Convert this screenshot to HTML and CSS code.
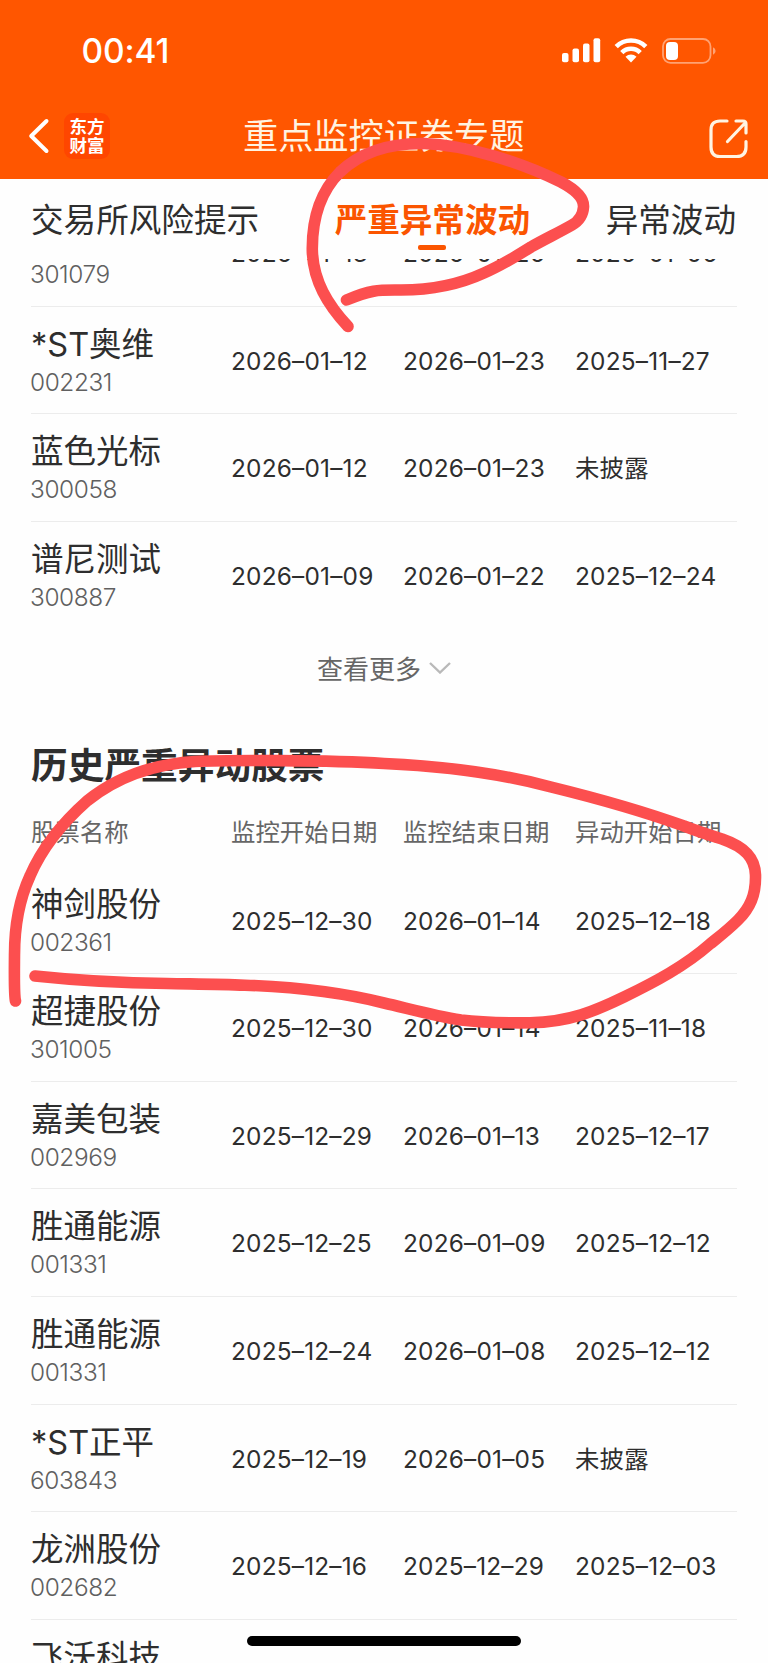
FILE: index.html
```html
<!DOCTYPE html>
<html lang="zh-CN">

<head>
    <meta charset="UTF-8">
    <meta name="viewport" content="width=device-width, initial-scale=1.0">
    <title>重点监控证券专题</title>
    <link rel="stylesheet" href="styles.css">
</head>

<body>
    <div class="screen">
        <header class="header">
            <div class="status-bar">
                <span class="clock">00:41</span>
                <div class="status-icons">
                    <svg class="signal" width="39" height="25" viewBox="0 0 39 25" fill="#fff">
                        <rect x="0" y="15" width="6.5" height="9.3" rx="2" />
                        <rect x="10.5" y="10.5" width="6.5" height="13.8" rx="2" />
                        <rect x="21" y="5.5" width="6.5" height="18.8" rx="2" />
                        <rect x="31.5" y="0.3" width="6.7" height="24" rx="2" />
                    </svg>
                    <svg class="wifi" width="34" height="25" viewBox="0 0 34 25">
                        <g fill="none" stroke="#fff" stroke-width="4.6">
                            <path d="M2.2 8.6a21 21 0 0 1 29.6 0" />
                            <path d="M7.8 14.6a13 13 0 0 1 18.4 0" />
                        </g>
                        <path d="M11.5 18.8a8 8 0 0 1 11 0L17 24.5z" fill="#fff" />
                    </svg>
                    <svg class="battery" width="54" height="26" viewBox="0 0 54 26">
                        <rect x="1" y="1" width="47.5" height="23.8" rx="7.5" fill="none" stroke="#ffa273" stroke-width="1.8" />
                        <rect x="4" y="4" width="12" height="18" rx="4" fill="#fff" />
                        <path d="M51 9.2q2.6 1.3 2.6 3.8T51 16.8z" fill="#ffa273" />
                    </svg>
                </div>
            </div>
            <nav class="nav-bar">
                <svg class="back" width="22" height="36" viewBox="0 0 22 36">
                    <path d="M18.5 3L3.2 18l15.3 15" fill="none" stroke="#fff" stroke-width="4" stroke-linecap="round" stroke-linejoin="round" />
                </svg>
                <div class="brand"><span>东方</span><span>财富</span></div>
                <h1 class="nav-title">重点监控证券专题</h1>
                <svg class="share" width="40" height="40" viewBox="0 0 40 40" fill="none" stroke="#fff4e2" stroke-width="3.2" stroke-linecap="round" stroke-linejoin="round">
                    <path d="M18 2H11Q2 2 2 11v17q0 9.5 9 9.5h16.500q9.5 0 9.5-9.5V22.5" />
                    <path d="M18.500 22.500L36.500 3.500M27 2h7q3 0 3 3v9" />
                </svg>
            </nav>
        </header>

        <div class="tabs">
            <span class="tab">交易所风险提示</span>
            <span class="tab active">严重异常波动</span>
            <span class="tab">异常波动</span>
        </div>

        <main class="content">
            <section class="current">
                <div class="row">
                    <div class="stock code-only"><i>301079</i></div>
                    <span>2026–01–13</span><span>2026–01–26</span><span>2026–01–06</span>
                </div>
                <div class="row">
                    <div class="stock"><b>*ST奥维</b><i>002231</i></div>
                    <span>2026–01–12</span><span>2026–01–23</span><span>2025–11–27</span>
                </div>
                <div class="row">
                    <div class="stock"><b>蓝色光标</b><i>300058</i></div>
                    <span>2026–01–12</span><span>2026–01–23</span><span>未披露</span>
                </div>
                <div class="row last">
                    <div class="stock"><b>谱尼测试</b><i>300887</i></div>
                    <span>2026–01–09</span><span>2026–01–22</span><span>2025–12–24</span>
                </div>
            </section>

            <div class="more">
                <span>查看更多</span>
                <svg width="22" height="13" viewBox="0 0 22 13">
                    <path d="M1 2l10 9.5L21 2" fill="none" stroke="#b9b9b9" stroke-width="2.4" />
                </svg>
            </div>

            <h2 class="section-title">历史严重异动股票</h2>
            <div class="table-head">
                <span>股票名称</span><span>监控开始日期</span><span>监控结束日期</span><span>异动开始日期</span>
            </div>

            <section class="history">
                <div class="row">
                    <div class="stock"><b>神剑股份</b><i>002361</i></div>
                    <span>2025–12–30</span><span>2026–01–14</span><span>2025–12–18</span>
                </div>
                <div class="row">
                    <div class="stock"><b>超捷股份</b><i>301005</i></div>
                    <span>2025–12–30</span><span>2026–01–14</span><span>2025–11–18</span>
                </div>
                <div class="row">
                    <div class="stock"><b>嘉美包装</b><i>002969</i></div>
                    <span>2025–12–29</span><span>2026–01–13</span><span>2025–12–17</span>
                </div>
                <div class="row">
                    <div class="stock"><b>胜通能源</b><i>001331</i></div>
                    <span>2025–12–25</span><span>2026–01–09</span><span>2025–12–12</span>
                </div>
                <div class="row">
                    <div class="stock"><b>胜通能源</b><i>001331</i></div>
                    <span>2025–12–24</span><span>2026–01–08</span><span>2025–12–12</span>
                </div>
                <div class="row">
                    <div class="stock"><b>*ST正平</b><i>603843</i></div>
                    <span>2025–12–19</span><span>2026–01–05</span><span>未披露</span>
                </div>
                <div class="row">
                    <div class="stock"><b>龙洲股份</b><i>002682</i></div>
                    <span>2025–12–16</span><span>2025–12–29</span><span>2025–12–03</span>
                </div>
                <div class="row last">
                    <div class="stock"><b>飞沃科技</b></div>
                </div>
            </section>
        </main>

        <!-- red pen marks -->
        <svg class="marks" width="768" height="1663" viewBox="0 0 768 1663">
            <path d="M348 326.5C328 305 313 281 312.3 250C312 215 322 190 340 172C362 151 392 143 424 143.5C467 145 520 162 561 182C578 191 584 199 583.5 207C583 215 579 221 572 225C558 233 545 239 531 247C512 259 500 266 484 273C458 285 430 290 401 290C380 290 372 289 346.5 300" />
            <path d="M15.5 1001C14 995 14.3 980 14.5 955C14.5 925 19 900 30 876C42 848 60 825 87 801C118 776 155 764 195 761.5C225 760 330 760 384 763.5C440 766 495 772 551 787C600 799 645 812 684 826C697 831 709 835 722 839C745 847 755 858 755.5 875C756 895 750 908 738 920C728 930 720 936 710 944C685 966 655 982 624 997C595 1011 570 1022 530 1022.8C505 1023 485 1023 461 1020C435 1016 410 1009 384 1003C340 992 295 987 245 985.2C219 984 193 984 167 983.5C120 983 82 981 35 976" />
        </svg>
        <div class="home-indicator"></div>
    </div>
</body>

</html>
```

FILE: styles.css
```css
* {
    box-sizing: border-box;
}

body {
    margin: 0;
    background: #fff;
    font-family: Inter, "Noto Sans CJK SC", sans-serif;
    color: #2e2e2e;
}

.screen {
    position: relative;
    width: 768px;
    height: 1663px;
    overflow: hidden;
    background: #fefefe;
}

/* header */
.header {
    height: 179px;
    background: #ff5600;
    color: #fff;
}

.status-bar {
    display: flex;
    justify-content: space-between;
    height: 93px;
    padding: 38px 52px 0 81.5px;
}

.clock {
    height: 26px;
    font-size: 33.5px;
    font-weight: 500;
    line-height: 27px;
    letter-spacing: -0.1px;
}

.status-icons {
    display: flex;
}

.wifi {
    margin-left: 13.5px;
}

.battery {
    margin-left: 14px;
}

.nav-bar {
    display: flex;
    align-items: center;
    height: 85px;
    padding: 0 19px 0 28px;
}

.brand {
    display: flex;
    flex-direction: column;
    justify-content: center;
    align-items: center;
    width: 46px;
    height: 46px;
    margin-left: 14px;
    border-radius: 9px;
    background: #ff4600;
    font-size: 17.5px;
    font-weight: 700;
    line-height: 19px;
}

.nav-title {
    flex: 1;
    margin: 0 0 0 133px;
    color: #fff4e2;
    font-size: 35.2px;
    font-weight: 400;
    line-height: 40px;
}

.share {
    margin-top: 7px;
}

/* tabs stay above the scrolled list */
.tabs {
    position: relative;
    z-index: 1;
    display: flex;
    height: 80px;
    padding: 21px 32px 0 31px;
    justify-content: space-between;
    background: #fefefe;
    font-size: 32.6px;
    line-height: 41px;
    white-space: nowrap;
}

.tab.active {
    color: #fb5500;
    font-weight: 600;
}

.tab.active::after {
    content: "";
    display: block;
    width: 28px;
    height: 5px;
    margin: 4px auto 0;
    border-radius: 2px;
    background: #fb5500;
}

.content {
    margin-top: -60px;
    padding: 0 31px 0 31px;
}

.row,
.table-head {
    display: grid;
    grid-template-columns: 200px 172px 172px 1fr;
    font-size: 24.4px;
    white-space: nowrap;
}

.row {
    height: 107.65px;
    border-bottom: 1.5px solid #ececec;
    letter-spacing: 0.2px;
}

.row.last {
    border-bottom-color: transparent;
}

.row > span {
    padding-top: 39px;
    line-height: 30px;
}

.stock {
    padding-top: 17px;
}

/* name is scrolled away under the tabs */
.stock.code-only {
    padding-top: 59px;
}

.stock b {
    display: block;
    font-size: 32.5px;
    font-weight: 400;
    line-height: 42px;
    letter-spacing: 0;
}

.stock i {
    display: block;
    margin-left: -1px;
    color: #606060;
    font-style: normal;
    font-weight: 300;
    line-height: 32px;
    letter-spacing: -0.4px;
}

.more {
    display: flex;
    justify-content: center;
    align-items: center;
    gap: 8px;
    height: 40px;
    margin-top: 18px;
    color: #666;
    font-size: 26px;
}

.section-title {
    margin: 55px 0 0;
    color: #2e2e2e;
    font-size: 36.7px;
    font-weight: 700;
    line-height: 46px;
}

.table-head {
    height: 78px;
    padding-top: 27px;
    color: #666;
    line-height: 32px;
}

.marks {
    position: absolute;
    z-index: 2;
    top: 0;
    left: 0;
    fill: none;
    stroke: #fc4f4f;
    stroke-width: 11.6;
    stroke-linecap: round;
    stroke-linejoin: round;
}

.home-indicator {
    position: absolute;
    bottom: 17px;
    left: 247px;
    width: 274px;
    height: 10px;
    border-radius: 5px;
    background: #000;
}
```
